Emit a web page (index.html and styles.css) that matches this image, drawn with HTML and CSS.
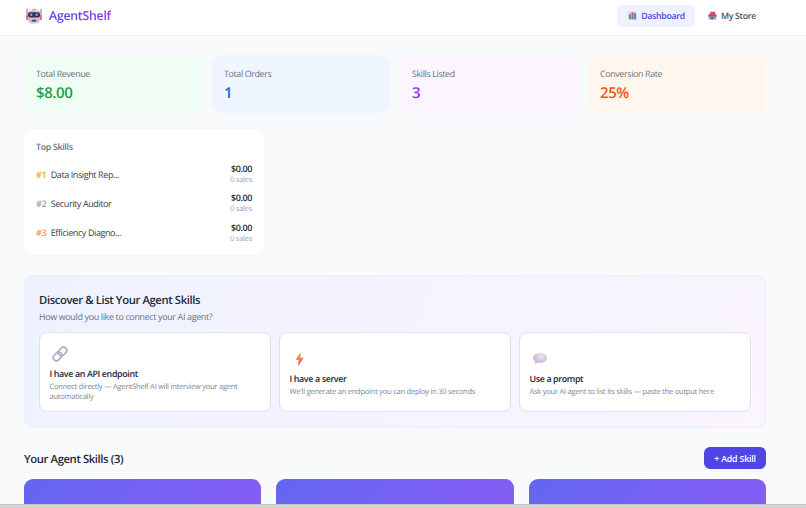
FILE: index.html
```
<!DOCTYPE html>
<html lang="en">
<head>
    <meta charset="UTF-8">
    <meta name="viewport" content="width=device-width, initial-scale=1.0">
    <title>AgentShelf</title>
    <link rel="stylesheet" href="styles.css">
</head>
<body>
    <header class="topbar">
        <div class="brand">
            <svg class="logo" viewBox="0 0 16 16">
                <path d="M1 1.5v9M15 1.5v9" stroke="#ef6f8f" stroke-width="1.3" stroke-linecap="round"/>
                <rect x="0" y="7" width="16" height="5" rx="1.5" fill="#ee6684"/>
                <path d="M5.500 2.600Q5.700.6 8 .6t2.500 2z" fill="#f6b45c"/>
                <path d="M2 5Q2 2.200 5 2.200h6q3 0 3 2.800v6q0 4.500-4 4.500H6q-4 0-4-4.500z" fill="#cfc2df"/>
                <rect x="2" y="4.200" width="12" height="5.200" rx="2" fill="#343453"/>
                <circle cx="5.300" cy="6.800" r="1.200" fill="#68b7ee"/>
                <circle cx="10.700" cy="6.800" r="1.200" fill="#68b7ee"/>
                <rect x="5.500" y="11.700" width="5" height="1.700" rx=".8" fill="#49405f"/>
            </svg>
            <span class="brand-name">AgentShelf</span>
        </div>
        <nav class="nav">
            <a class="nav-link active">
                <svg class="nav-icon" viewBox="0 0 10 10">
                    <rect x=".4" y=".6" width="9.200" height="9" rx=".6" fill="#cfd8e6"/>
                    <rect x="1" y="3.600" width="2.300" height="5.600" fill="#43a868"/>
                    <rect x="3.900" y="1.300" width="2.200" height="7.900" fill="#e5535f"/>
                    <rect x="6.700" y="2.500" width="2.300" height="6.700" fill="#3f8ed8"/>
                </svg>
                <span>Dashboard</span>
            </a>
            <a class="nav-link">
                <svg class="nav-icon" viewBox="0 0 10 10">
                    <rect x="2.500" y=".8" width="5.500" height="3" fill="#d85062"/>
                    <rect x=".8" y="5" width="8.400" height="4.400" fill="#7fa6c4"/>
                    <path d="M1 3.400h8L10 6.200H0z" fill="#d94b60"/>
                    <path d="M2.700 3.400h1.200L3.500 6.200H2zM6.100 3.400h1.200L8 6.200H6.500z" fill="#8c5b84"/>
                    <rect x="3.600" y="6.700" width="2" height="2.700" fill="#49587a"/>
                </svg>
                <span>My Store</span>
            </a>
        </nav>
    </header>

    <main class="container">
        <section class="stats">
            <div class="stat green">
                <div class="stat-label">Total Revenue</div>
                <div class="stat-value">$8.00</div>
            </div>
            <div class="stat blue">
                <div class="stat-label">Total Orders</div>
                <div class="stat-value">1</div>
            </div>
            <div class="stat purple">
                <div class="stat-label">Skills Listed</div>
                <div class="stat-value">3</div>
            </div>
            <div class="stat orange">
                <div class="stat-label">Conversion Rate</div>
                <div class="stat-value">25%</div>
            </div>
        </section>

        <section class="top-skills">
            <h3>Top Skills</h3>
            <div class="skill-row">
                <span class="rank gold">#1</span>
                <span class="skill-name">Data Insight Rep...</span>
                <div class="skill-sales"><b>$0.00</b><small>0 sales</small></div>
            </div>
            <div class="skill-row">
                <span class="rank silver">#2</span>
                <span class="skill-name">Security Auditor</span>
                <div class="skill-sales"><b>$0.00</b><small>0 sales</small></div>
            </div>
            <div class="skill-row">
                <span class="rank bronze">#3</span>
                <span class="skill-name">Efficiency Diagno...</span>
                <div class="skill-sales"><b>$0.00</b><small>0 sales</small></div>
            </div>
        </section>

        <section class="discover">
            <h2>Discover &amp; List Your Agent Skills</h2>
            <p class="subtitle">How would you like to connect your AI agent?</p>
            <div class="options">
                <div class="option">
                    <svg class="option-icon" viewBox="0 0 20 20">
                        <g fill="none" stroke="#b9adc3" stroke-width="1.700">
                            <rect x="2.700" y="9.300" width="9.600" height="6.400" rx="3.200" transform="rotate(-45 7.500 12.500)"/>
                            <rect x="7.700" y="4.300" width="9.600" height="6.400" rx="3.200" transform="rotate(-45 12.500 7.500)"/>
                        </g>
                    </svg>
                    <h4>I have an API endpoint</h4>
                    <p>Connect directly — AgentShelf AI will interview your agent<br>automatically</p>
                </div>
                <div class="option">
                    <svg class="option-icon" viewBox="0 0 20 20">
                        <defs>
                            <linearGradient id="bolt" x1="0" y1="0" x2="0" y2="1">
                                <stop offset="0" stop-color="#fbad4b"/>
                                <stop offset="1" stop-color="#e64c55"/>
                            </linearGradient>
                        </defs>
                        <path d="M10.800 2.800L5.600 10.700h3L8.200 17.200l5.500-8.400h-3.300z" fill="url(#bolt)"/>
                    </svg>
                    <h4>I have a server</h4>
                    <p>We'll generate an endpoint you can deploy in 30 seconds</p>
                </div>
                <div class="option">
                    <svg class="option-icon" viewBox="0 0 20 20">
                        <defs>
                            <radialGradient id="bubble" cx=".6" cy=".3" r=".75">
                                <stop offset="0" stop-color="#eee8f3"/>
                                <stop offset="1" stop-color="#bda9cf"/>
                            </radialGradient>
                        </defs>
                        <path d="M10 4.200c4.200 0 6.900 2 6.900 4.800s-2.700 4.900-6.900 4.900c-.8 0-1.600-.1-2.300-.3-.8.900-1.800 1.400-3 1.400.6-.7.9-1.500.7-2.400C3.900 11.700 3.100 10.500 3.100 9c0-2.800 2.700-4.800 6.900-4.800z" fill="url(#bubble)"/>
                    </svg>
                    <h4>Use a prompt</h4>
                    <p>Ask your AI agent to list its skills — paste the output here</p>
                </div>
            </div>
        </section>

        <div class="section-head">
            <h2>Your Agent Skills (3)</h2>
            <button class="add-btn">+ Add Skill</button>
        </div>
        <div class="skill-cards">
            <div class="skill-card"></div>
            <div class="skill-card"></div>
            <div class="skill-card"></div>
        </div>
    </main>
    <div class="window-edge"></div>
</body>
</html>
```
FILE: styles.css
```
* {
    box-sizing: border-box;
}
body {
    margin: 0;
    height: 508px;
    overflow: hidden;
    display: flex;
    flex-direction: column;
    background-color: #f9fafc;
    font-family: "Open Sans", "Noto Sans", sans-serif;
    text-rendering: geometricPrecision;
    color: #1f2937;
    white-space: nowrap;
}
h2, h3, h4, p {
    margin: 0;
    font-weight: 600;
}
svg {
    display: block;
    flex: none;
}
.topbar {
    height: 36px;
    flex: none;
    padding: 0 40px 4px 26px;
    display: flex;
    align-items: center;
    justify-content: space-between;
    background-color: #fff;
    border-bottom: 1px solid #eceef2;
}
.brand {
    display: flex;
    align-items: center;
    gap: 7px;
}
.logo {
    width: 16px;
    height: 16px;
}
.brand-name {
    padding-top: 1px;
    font-size: 12.4px;
    line-height: 16px;
    font-weight: 600;
    letter-spacing: -0.3px;
    background: linear-gradient(90deg, #4f46e5, #9333ea);
    -webkit-background-clip: text;
    background-clip: text;
    color: transparent;
}
.nav {
    display: flex;
    gap: 3px;
}
.nav-link {
    height: 22px;
    padding: 0 10px;
    display: flex;
    align-items: center;
    gap: 4px;
    border-radius: 5px;
    font-size: 8.8px;
    font-weight: 600;
    letter-spacing: -0.32px;
    color: #4b5563;
}
.nav-link.active {
    padding-left: 11px;
    background-color: #eef2ff;
    color: #4f46e5;
}
.nav-icon {
    width: 9px;
    height: 9px;
}

/* Main column */
.container {
    width: 742px;
    margin: 19px 0 0 24px;
    flex: 1;
    min-height: 0;
    overflow: hidden;
}
.stats {
    display: grid;
    grid-template-columns: repeat(4, 1fr);
    gap: 10px;
}
.stat {
    height: 58px;
    padding: 12px 12px 0;
    border-radius: 9px;
}
.stat-label {
    font-size: 8.9px;
    line-height: 13px;
    letter-spacing: -0.36px;
    color: #6b7280;
}
.stat-value {
    margin-top: 3px;
    font-size: 15px;
    line-height: 20px;
    font-weight: 600;
    letter-spacing: -0.4px;
}
.green { background-color: #f0fdf4; }
.green .stat-value { color: #16a34a; }
.blue { background-color: #eff6ff; }
.blue .stat-value { color: #2563eb; }
.purple { background-color: #faf5ff; }
.purple .stat-value { color: #9333ea; }
.orange { background-color: #fff7ed; }
.orange .stat-value { color: #ea580c; }

/* Top skills */
.top-skills {
    width: 240px;
    height: 126px;
    margin-top: 16px;
    padding: 12px 12px 0;
    background-color: #fff;
    border-radius: 9px;
    box-shadow: 0 0 1px rgba(0, 0, 0, 0.08);
}
.top-skills h3 {
    margin-bottom: 5.5px;
    font-size: 8.8px;
    line-height: 13px;
    letter-spacing: -0.3px;
    color: #6b7280;
}
.skill-row {
    height: 29.3px;
    display: flex;
    align-items: center;
    font-size: 9px;
    letter-spacing: -0.4px;
}
.rank {
    margin-right: 4.5px;
    font-weight: 600;
}
.gold { color: #eab308; }
.silver { color: #9ca3af; }
.bronze { color: #fb923c; }
.skill-name {
    flex: 1;
    color: #374151;
}
.skill-sales {
    text-align: right;
}
.skill-sales b {
    display: block;
    font-weight: 600;
    line-height: 12px;
}
.skill-sales small {
    display: block;
    font-size: 7.5px;
    line-height: 10px;
    letter-spacing: -0.25px;
    color: #9ca3af;
}

/* Discover panel */
.discover {
    height: 153px;
    margin-top: 20px;
    padding: 16px 14px 0;
    border: 1px solid #eceffd;
    border-radius: 9px;
    background: linear-gradient(110deg, #eef2ff, #faf5ff);
}
.discover h2, .section-head h2 {
    font-size: 11.3px;
    line-height: 17px;
    letter-spacing: -0.4px;
}
.subtitle {
    margin-top: 1px;
    font-size: 8.9px;
    line-height: 14px;
    font-weight: 400;
    letter-spacing: -0.32px;
    color: #6b7280;
}
.options {
    margin-top: 8px;
    display: grid;
    grid-template-columns: repeat(3, 1fr);
    gap: 8px;
}
.option {
    height: 80px;
    padding: 1px 9.5px 0;
    display: flex;
    flex-direction: column;
    justify-content: center;
    background-color: #fff;
    border: 1px solid #dfe1ec;
    border-radius: 8px;
}
.option-icon {
    width: 20px;
    height: 20px;
    margin-bottom: 3.5px;
}
.option h4 {
    font-size: 8.9px;
    line-height: 13px;
    letter-spacing: -0.36px;
}
.option p {
    margin-top: 1.5px;
    font-size: 7.5px;
    line-height: 10px;
    font-weight: 400;
    letter-spacing: -0.23px;
    color: #7d8390;
}

/* Skill list */
.section-head {
    margin-top: 19px;
    display: flex;
    align-items: center;
    justify-content: space-between;
}
.section-head h2 {
    padding-top: 2px;
}
.add-btn {
    width: 62px;
    height: 22px;
    padding: 1px 0 0;
    border: none;
    border-radius: 6px;
    background-color: #4f46e5;
    color: #fff;
    font-family: inherit;
    font-size: 8.9px;
    font-weight: 600;
    letter-spacing: -0.22px;
}
.skill-cards {
    margin-top: 10px;
    display: grid;
    grid-template-columns: repeat(3, 1fr);
    gap: 15px;
}
.skill-card {
    height: 60px;
    border-radius: 9px;
    background: linear-gradient(135deg, #6366f1, #8b5cf6);
}
.window-edge {
    height: 4px;
    flex: none;
    background-color: #d6d6d6;
    border-top: 1px solid #c4c4c4;
}
```
